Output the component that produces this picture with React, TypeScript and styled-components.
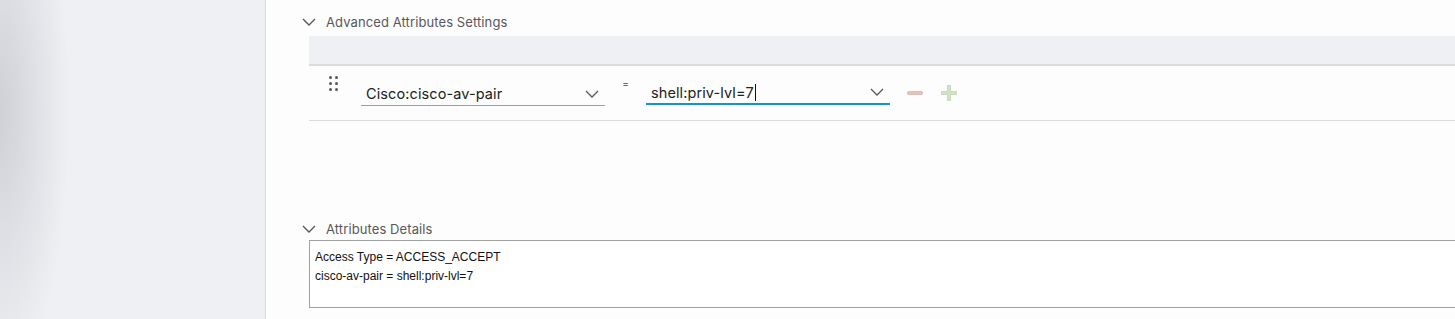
import * as React from "react";
import styled, { createGlobalStyle } from "styled-components";

const GlobalStyle = createGlobalStyle`
  html, body {
    margin: 0;
    padding: 0;
    background: #fdfdfd;
    font-family: Inter, "Open Sans", Arial, sans-serif;
  }
`;

const Page = styled.div`
  display: flex;
  height: 319px;
  overflow: hidden;
`;

const Sidebar = styled.aside`
  width: 265px;
  flex-shrink: 0;
  border-right: 1px solid #d9d9db;
  background:
    radial-gradient(ellipse 70px 270px at 0px 110px, rgba(185, 187, 192, 0.6), rgba(185, 187, 192, 0) 100%),
    #eff0f4;
`;

const Main = styled.main`
  flex: 1;
  min-width: 0;
  padding: 12px 0 0 36px;
  overflow: hidden;
`;

const Section = styled.section<{ gap?: number }>`
  margin-right: -20px;
  margin-bottom: ${p => p.gap || 0}px;
`;

const SectionHeader = styled.div`
  display: flex;
  align-items: center;
  height: 20px;
  gap: 10px;
  color: #58585b;
  font-size: 13px;
  letter-spacing: 0.1px;
`;

const Body = styled.div<{ top: number }>`
  margin: ${p => p.top}px 0 0 7px;
`;

const GreyStrip = styled.div`
  height: 28px;
  background: #eff0f4;
  border-bottom: 2px solid #dcdcdc;
`;

const AttrRow = styled.div`
  display: flex;
  align-items: flex-start;
  height: 54px;
  border-bottom: 1px solid #dcdcdc;
`;

const Handle = styled.div`
  display: grid;
  grid-template-columns: repeat(2, 3px);
  grid-auto-rows: 3px;
  gap: 3px 3px;
  margin: 10px 23px 0 20px;
  & > span {
    background: #58585b;
    border-radius: 50%;
  }
`;

const Select = styled.div<{ active?: boolean }>`
  display: flex;
  align-items: center;
  justify-content: space-between;
  width: 244px;
  height: 26px;
  box-sizing: border-box;
  margin-top: ${p => (p.active ? 13 : 14)}px;
  padding: 2px 6px 0 5px;
  border-bottom: ${p => (p.active ? "2px solid #0d95d9" : "1px solid #9e9ea2")};
  font-size: 14.5px;
  letter-spacing: 0.1px;
  color: #212121;
`;

const Caret = styled.span`
  display: inline-block;
  width: 1px;
  height: 17px;
  background: #111;
  margin-left: 1px;
  vertical-align: -3px;
`;

const Equals = styled.div`
  width: 41px;
  text-align: center;
  font-size: 10px;
  color: #444;
  padding-top: 11px;
`;

const IconButton = styled.button`
  border: none;
  background: none;
  padding: 0;
  width: 18px;
  height: 18px;
  margin-top: 18px;
  margin-left: 16px;
  display: flex;
  align-items: center;
  justify-content: center;
`;

const Details = styled.div`
  height: 68px;
  border: 1px solid #a0a0a0;
  background: #fff;
  padding: 7px 5px;
  box-sizing: border-box;
  font-family: "Liberation Sans", Arial, sans-serif;
  font-size: 12px;
  line-height: 19px;
  color: #111;
`;

const Chevron = () => (
  <svg width="14" height="8" viewBox="0 0 14 8">
    <path d="M1 1l6 6 6-6" fill="none" stroke="#58585b" strokeWidth="1.4" />
  </svg>
);

const SelectChevron = () => (
  <svg width="14" height="8" viewBox="0 0 14 8">
    <path d="M1 1l6 6 6-6" fill="none" stroke="#58585b" strokeWidth="1.3" />
  </svg>
);

const Minus = () => (
  <svg width="16" height="16" viewBox="0 0 16 16">
    <rect x="0.5" y="6.5" width="15" height="3" rx="1.2" fill="#e6c2b9" stroke="#d4a89c" strokeWidth="0.6" />
  </svg>
);

const Plus = () => (
  <svg width="16" height="16" viewBox="0 0 16 16">
    <path
      d="M6.5 0.5h3v6h6v3h-6v6h-3v-6h-6v-3h6z"
      fill="#d2e2c4"
      stroke="#b5c9a3"
      strokeWidth="0.6"
    />
  </svg>
);

export default function App() {
  return (
    <>
      <GlobalStyle />
      <Page>
        <Sidebar />
        <Main>
          <Section gap={98}>
            <SectionHeader>
              <Chevron />
              Advanced Attributes Settings
            </SectionHeader>
            <Body top={4}>
              <GreyStrip />
              <AttrRow>
                <Handle>
                  {[0, 1, 2, 3, 4, 5].map(i => (
                    <span key={i} />
                  ))}
                </Handle>
                <Select>
                  <span>Cisco:cisco-av-pair</span>
                  <SelectChevron />
                </Select>
                <Equals>=</Equals>
                <Select active>
                  <span>
                    shell:priv-lvl=7
                    <Caret />
                  </span>
                  <SelectChevron />
                </Select>
                <IconButton>
                  <Minus />
                </IconButton>
                <IconButton>
                  <Plus />
                </IconButton>
              </AttrRow>
            </Body>
          </Section>
          <Section>
            <SectionHeader>
              <Chevron />
              Attributes Details
            </SectionHeader>
            <Body top={1}>
              <Details>
                <div>Access Type = ACCESS_ACCEPT</div>
                <div>cisco-av-pair = shell:priv-lvl=7</div>
              </Details>
            </Body>
          </Section>
        </Main>
      </Page>
    </>
  );
}
